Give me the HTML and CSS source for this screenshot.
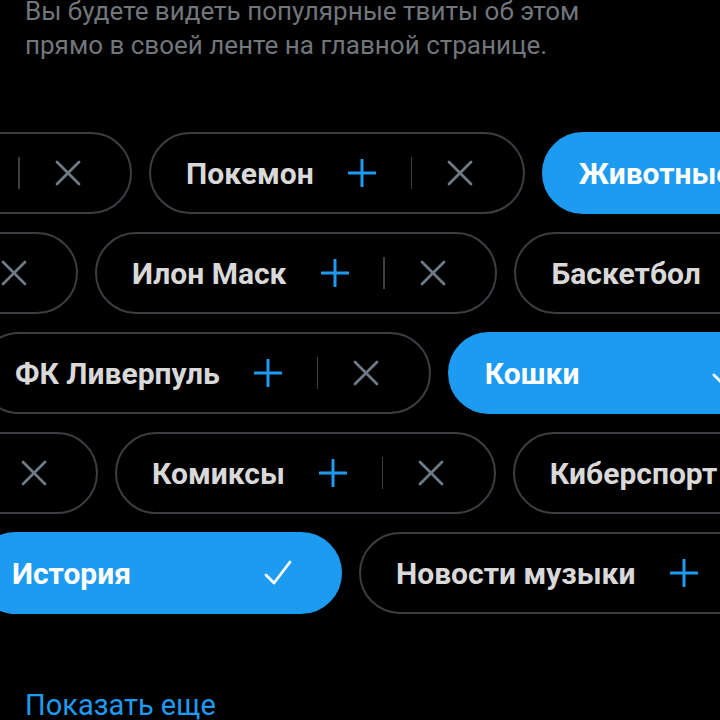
FILE: index.html
```html
<!DOCTYPE html>
<html lang="ru">
<head>
<meta charset="utf-8">
<link rel="stylesheet" href="styles.css">
</head>
<body>
<main class="page">
  <p class="intro">Вы будете видеть популярные твиты об этом<br>прямо в своей ленте на главной странице.</p>

  <section class="topics">
    <div class="row row-1">
      <div class="pill pill-partial">
        <span class="label"></span>
        <span class="act act-plus"><svg viewBox="0 0 28 28"><path d="M14 1v26M1 14h26"/></svg></span>
        <span class="divider"></span>
        <span class="act act-x"><svg viewBox="0 0 26 26"><path d="M2 2l22 22M24 2L2 24"/></svg></span>
      </div>
      <div class="pill">
        <span class="label">Покемон</span>
        <span class="act act-plus"><svg viewBox="0 0 28 28"><path d="M14 1v26M1 14h26"/></svg></span>
        <span class="divider"></span>
        <span class="act act-x"><svg viewBox="0 0 26 26"><path d="M2 2l22 22M24 2L2 24"/></svg></span>
      </div>
      <div class="pill pill-on">
        <span class="label">Животные</span>
        <span class="act act-plus"></span>
        <span class="divider"></span>
        <span class="act act-check"><svg viewBox="0 0 28 26"><path d="M2 15l8 8L26 2"/></svg></span>
      </div>
    </div>

    <div class="row row-2">
      <div class="pill pill-partial">
        <span class="label"></span>
        <span class="act act-plus"><svg viewBox="0 0 28 28"><path d="M14 1v26M1 14h26"/></svg></span>
        <span class="divider"></span>
        <span class="act act-x"><svg viewBox="0 0 26 26"><path d="M2 2l22 22M24 2L2 24"/></svg></span>
      </div>
      <div class="pill">
        <span class="label">Илон Маск</span>
        <span class="act act-plus"><svg viewBox="0 0 28 28"><path d="M14 1v26M1 14h26"/></svg></span>
        <span class="divider"></span>
        <span class="act act-x"><svg viewBox="0 0 26 26"><path d="M2 2l22 22M24 2L2 24"/></svg></span>
      </div>
      <div class="pill">
        <span class="label">Баскетбол</span>
        <span class="act act-plus"><svg viewBox="0 0 28 28"><path d="M14 1v26M1 14h26"/></svg></span>
        <span class="divider"></span>
        <span class="act act-x"><svg viewBox="0 0 26 26"><path d="M2 2l22 22M24 2L2 24"/></svg></span>
      </div>
    </div>

    <div class="row row-3">
      <div class="pill">
        <span class="label">ФК Ливерпуль</span>
        <span class="act act-plus"><svg viewBox="0 0 28 28"><path d="M14 1v26M1 14h26"/></svg></span>
        <span class="divider"></span>
        <span class="act act-x"><svg viewBox="0 0 26 26"><path d="M2 2l22 22M24 2L2 24"/></svg></span>
      </div>
      <div class="pill pill-on">
        <span class="label">Кошки</span>
        <span class="act act-plus"></span>
        <span class="divider"></span>
        <span class="act act-check"><svg viewBox="0 0 28 26"><path d="M2 15l8 8L26 2"/></svg></span>
      </div>
    </div>

    <div class="row row-4">
      <div class="pill pill-partial">
        <span class="label"></span>
        <span class="act act-plus"><svg viewBox="0 0 28 28"><path d="M14 1v26M1 14h26"/></svg></span>
        <span class="divider"></span>
        <span class="act act-x"><svg viewBox="0 0 26 26"><path d="M2 2l22 22M24 2L2 24"/></svg></span>
      </div>
      <div class="pill">
        <span class="label">Комиксы</span>
        <span class="act act-plus"><svg viewBox="0 0 28 28"><path d="M14 1v26M1 14h26"/></svg></span>
        <span class="divider"></span>
        <span class="act act-x"><svg viewBox="0 0 26 26"><path d="M2 2l22 22M24 2L2 24"/></svg></span>
      </div>
      <div class="pill">
        <span class="label">Киберспорт</span>
        <span class="act act-plus"><svg viewBox="0 0 28 28"><path d="M14 1v26M1 14h26"/></svg></span>
        <span class="divider"></span>
        <span class="act act-x"><svg viewBox="0 0 26 26"><path d="M2 2l22 22M24 2L2 24"/></svg></span>
      </div>
    </div>

    <div class="row row-5">
      <div class="pill pill-on">
        <span class="label">История</span>
        <span class="act act-plus"></span>
        <span class="divider"></span>
        <span class="act act-check"><svg viewBox="0 0 28 26"><path d="M2 15l8 8L26 2"/></svg></span>
      </div>
      <div class="pill">
        <span class="label">Новости музыки</span>
        <span class="act act-plus"><svg viewBox="0 0 28 28"><path d="M14 1v26M1 14h26"/></svg></span>
        <span class="divider"></span>
        <span class="act act-x"><svg viewBox="0 0 26 26"><path d="M2 2l22 22M24 2L2 24"/></svg></span>
      </div>
    </div>
  </section>

  <a class="more" href="#">Показать еще</a>
</main>
</body>
</html>
```

FILE: styles.css
```css
html, body {
  margin: 0;
  padding: 0;
  background: #000;
}

body {
  width: 720px;
  height: 720px;
  overflow: hidden;
  font-family: Roboto, "Noto Sans", sans-serif;
}

.page {
  display: flex;
  flex-direction: column;
}

.intro {
  margin: -6px 0 0 25px;
  font-size: 26px;
  line-height: 34px;
  color: #71767b;
  font-weight: 400;
}

.topics {
  display: flex;
  flex-direction: column;
  gap: 18px;
  margin-top: 70px;
}

.row {
  display: flex;
  gap: 17px;
}

.row-1 { margin-left: -116px; }
.row-2 { margin-left: -170px; }
.row-3 { margin-left: -22px; }
.row-4 { margin-left: -150px; }
.row-5 { margin-left: -25px; }

.pill {
  flex-shrink: 0;
  display: flex;
  align-items: center;
  height: 82px;
  box-sizing: border-box;
  padding: 0 14.5px 0 35px;
  border: 2px solid #3a3e42;
  border-radius: 41px;
}

.pill-on {
  background: #1d9bf0;
  border-color: #1d9bf0;
}

.label {
  font-size: 30px;
  font-weight: 700;
  color: #d9d9d9;
  white-space: nowrap;
}

.pill-on .label {
  color: #fff;
}

.act {
  display: flex;
  align-items: center;
  justify-content: center;
  height: 40px;
}

.act-plus { width: 97px; }
.act-x, .act-check { width: 96px; }

.act svg {
  display: block;
  fill: none;
  stroke-linecap: round;
  stroke-linejoin: round;
}

.act-plus svg {
  width: 28px;
  height: 28px;
  stroke: #1d9bf0;
  stroke-width: 3;
}

.act-x svg {
  width: 26px;
  height: 26px;
  stroke: #6e7b86;
  stroke-width: 2.8;
}

.act-check svg {
  width: 28px;
  height: 26px;
  stroke: #fff;
  stroke-width: 2.8;
}

.divider {
  width: 1.5px;
  height: 32px;
  background: #3c4043;
}

.pill-on .divider {
  background: transparent;
}

.more {
  margin: 74px 0 0 25px;
  font-size: 29px;
  line-height: 34px;
  color: #1d9bf0;
  text-decoration: none;
}
```
